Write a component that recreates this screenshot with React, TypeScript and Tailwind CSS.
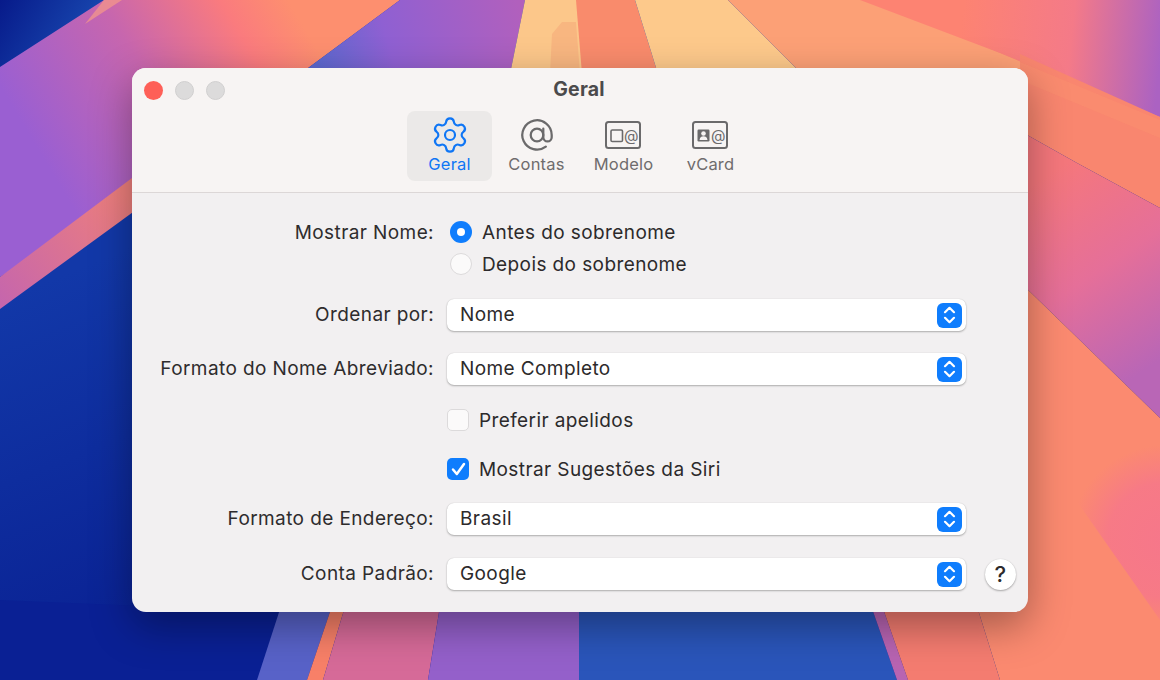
import React from "react";

const FONT = "font-['Inter','Liberation_Sans',sans-serif]";

function Wallpaper() {
  return (
    <svg className="absolute inset-0" width="1160" height="680" viewBox="0 0 1160 680">
      <defs>
        <linearGradient id="blueL" x1="0" y1="300" x2="130" y2="620" gradientUnits="userSpaceOnUse">
          <stop offset="0" stopColor="#1238a8" />
          <stop offset="1" stopColor="#0a2294" />
        </linearGradient>
        <linearGradient id="corner" x1="0" y1="0" x2="100" y2="60" gradientUnits="userSpaceOnUse">
          <stop offset="0" stopColor="#071a8a" />
          <stop offset="1" stopColor="#1c52b8" />
        </linearGradient>
        <linearGradient id="leftTop" x1="50" y1="170" x2="300" y2="20" gradientUnits="userSpaceOnUse">
          <stop offset="0" stopColor="#9a5fd2" />
          <stop offset="0.45" stopColor="#c766ae" />
          <stop offset="0.8" stopColor="#fa7b7e" />
          <stop offset="1" stopColor="#fd8f6f" />
        </linearGradient>
        <linearGradient id="purpleTop" x1="320" y1="70" x2="520" y2="10" gradientUnits="userSpaceOnUse">
          <stop offset="0" stopColor="#5d68cf" />
          <stop offset="0.35" stopColor="#8f60d2" />
          <stop offset="1" stopColor="#b160bd" />
        </linearGradient>
        <linearGradient id="rightTop" x1="960" y1="40" x2="1160" y2="60" gradientUnits="userSpaceOnUse">
          <stop offset="0" stopColor="#fd8372" />
          <stop offset="0.55" stopColor="#f47a88" />
          <stop offset="1" stopColor="#ab62c2" />
        </linearGradient>
        <linearGradient id="rightMid" x1="1040" y1="180" x2="1160" y2="360" gradientUnits="userSpaceOnUse">
          <stop offset="0" stopColor="#f5777c" />
          <stop offset="0.5" stopColor="#e56f99" />
          <stop offset="1" stopColor="#b966b6" />
        </linearGradient>
        <radialGradient id="pinkFade" cx="1165" cy="540" r="95" gradientUnits="userSpaceOnUse">
          <stop offset="0" stopColor="#f6778a" />
          <stop offset="0.6" stopColor="#f6778a" stopOpacity="0.85" />
          <stop offset="1" stopColor="#f6778a" stopOpacity="0" />
        </radialGradient>
        <linearGradient id="band" x1="0" y1="300" x2="130" y2="200" gradientUnits="userSpaceOnUse">
          <stop offset="0" stopColor="#c666ac" />
          <stop offset="1" stopColor="#ee7f7c" />
        </linearGradient>
      </defs>
      <rect width="1160" height="680" fill="url(#blueL)" />
      <polygon points="0,0 104,0 0,67" fill="url(#corner)" />
      <polygon points="104,0 400,0 300,74 300,150 140,190 0,277 0,67" fill="url(#leftTop)" />
      <polygon points="104,0 122,0 85,24" fill="#f79a88" opacity="0.7" />
      <polygon points="140,172 140,207 0,309 0,277" fill="url(#band)" />
      <polygon points="400,0 525,0 510,74 300,74" fill="url(#purpleTop)" />
      <polygon points="525,0 580,0 590,74 510,74" fill="#fcc78a" />
      <polygon points="550,74 552,34 562,22 576,22 580,74" fill="#f8b680" />
      <polygon points="576,0 635,0 658,74 582,74" fill="#f98b6c" />
      <polygon points="635,0 728,0 802,74 658,74" fill="#fdc98b" />
      <polygon points="850,0 1160,0 1160,130 1020,90" fill="#fb8870" />
      <polygon points="728,0 875,0 1045,72 1040,80 802,74" fill="#fca076" />
      <polygon points="860,0 1160,0 1160,117 1060,77 1000,53" fill="url(#rightTop)" />
      <polygon points="1020,54 1160,117 1160,208 1077,163 1020,131" fill="#f9866f" />
      <polygon points="1020,62 1160,120 1160,138 1020,80" fill="#fd9470" opacity="0.35" />
      <polygon points="1020,131 1077,163 1160,208 1160,418 1020,282" fill="url(#rightMid)" />
      <polygon points="1020,282 1160,418 1160,680 1020,680" fill="#fb8a70" />
      <polygon points="1057,473 1160,620 1160,420 1057,420" fill="url(#pinkFade)" />
      <polygon points="0,600 283,612 257,680 0,680" fill="#0a2094" />
      <polygon points="283,600 334,600 307,680 257,680" fill="#5862c8" />
      <polygon points="334,600 347,600 323,680 307,680" fill="#f88068" />
      <polygon points="347,600 441,600 428,680 323,680" fill="#d66a98" />
      <polygon points="441,600 579,600 579,680 428,680" fill="#9460ca" />
      <polygon points="579,600 869,600 897,680 579,680" fill="#2a55ba" />
      <polygon points="869,600 880,600 908,680 897,680" fill="#b864b2" />
      <polygon points="880,600 975,600 1000,680 908,680" fill="#f47c70" />
      <polygon points="975,600 1020,600 1020,680 1000,680" fill="#fb8a70" />
    </svg>
  );
}

function Stepper() {
  return (
    <span className="flex h-[25px] w-[25px] items-center justify-center rounded-[6px] bg-[#0f7dfd]">
      <svg width="15" height="20" viewBox="0 0 15 20" fill="none" stroke="#fff" strokeWidth="2.2" strokeLinecap="round" strokeLinejoin="round">
        <path d="M3 7.200 7.500 2.800 12 7.200" />
        <path d="M3 12.800 7.500 17.200 12 12.800" />
      </svg>
    </span>
  );
}

function Select({ value }: { value: string }) {
  return (
    <div className="flex h-[32px] w-[519px] items-center justify-between rounded-[7px] bg-white pl-[13px] pr-[4px] text-[#2c2a2b] shadow-[0_1px_2px_rgba(0,0,0,0.28),0_0_1px_rgba(0,0,0,0.18)]">
      <span>{value}</span>
      <Stepper />
    </div>
  );
}

function Row({ label, children, className = "" }: { label?: string; children: React.ReactNode; className?: string }) {
  return (
    <div className={`flex items-center ${className}`}>
      <div className="w-[302px] text-right text-[#2e2c2d]">{label}</div>
      <div className="ml-[13px] flex items-center">{children}</div>
    </div>
  );
}

function Tab({ label, active, children }: { label: string; active?: boolean; children: React.ReactNode }) {
  return (
    <div className={`flex h-[70px] w-[85px] flex-col items-center rounded-[8px] ${active ? "bg-[#ebe9e8] text-[#0f76f5]" : "text-[#6f6c6d]"}`}>
      <div className="flex h-[44px] items-center justify-center pt-[3px]">{children}</div>
      <span className="text-[16.500px] leading-[19px] tracking-[0.2px]">{label}</span>
    </div>
  );
}

function CardIcon({ person }: { person?: boolean }) {
  return (
    <svg width="36" height="28" viewBox="0 0 36 28" fill="none" className="-translate-x-[1px]">
      <rect x="1" y="1" width="34" height="26" rx="2.500" stroke="#6b6a6b" strokeWidth="2" />
      {person ? (
        <g>
          <rect x="5.500" y="8.500" width="12" height="12" rx="1.200" fill="#6b6a6b" />
          <circle cx="11.500" cy="12.500" r="2.300" fill="#f7f4f3" />
          <path d="M7.500 19c.4-2.800 2-3.800 4-3.800s3.600 1 4 3.800z" fill="#f7f4f3" />
        </g>
      ) : (
        <rect x="6" y="9" width="11.500" height="11.500" rx="1.300" stroke="#6b6a6b" strokeWidth="1.600" />
      )}
      <text x="26.500" y="19.500" textAnchor="middle" fontSize="15" fontFamily="Inter, sans-serif" fill="#6b6a6b">@</text>
    </svg>
  );
}

function Radio({ checked, label }: { checked?: boolean; label: string }) {
  return (
    <div className="flex h-[22px] items-center text-[#2c2a2b]">
      {checked ? (
        <span className="flex h-[22px] w-[22px] items-center justify-center rounded-full bg-[#0f7dfd]">
          <span className="h-[8px] w-[8px] rounded-full bg-white" />
        </span>
      ) : (
        <span className="h-[22px] w-[22px] rounded-full border border-[#dcdadb] bg-[#fbfafa]" />
      )}
      <span className="ml-[10px] pt-[3px]">{label}</span>
    </div>
  );
}

function Check({ checked, label }: { checked?: boolean; label: string }) {
  return (
    <div className="flex h-[22px] items-center text-[#2c2a2b]">
      {checked ? (
        <span className="flex h-[22px] w-[22px] items-center justify-center rounded-[5px] bg-[#0f7dfd]">
          <svg width="15" height="14" viewBox="0 0 15 14" fill="none" stroke="#fff" strokeWidth="2.500" strokeLinecap="round" strokeLinejoin="round">
            <path d="M2 7.500 5.800 12 13 2" />
          </svg>
        </span>
      ) : (
        <span className="h-[22px] w-[22px] rounded-[5px] border border-[#dcdadb] bg-[#fbfafa]" />
      )}
      <span className="ml-[10px] pt-[3px]">{label}</span>
    </div>
  );
}

export default function App() {
  return (
    <div className={`relative h-[680px] w-[1160px] overflow-hidden pl-[132px] pt-[68px] ${FONT}`}>
      <Wallpaper />
      <div className="relative h-[544px] w-[896px] overflow-hidden rounded-[14px] bg-[#f2f0f1] text-[19px] tracking-[0.4px] shadow-[0_14px_40px_rgba(0,0,0,0.35)]">
        <div className="h-[125px] border-b border-[#dcd7d7] bg-[#f7f4f3]">
          <div className="flex h-[43px] items-center pl-[12px]">
            <div className="flex gap-[12px] pt-[1px]">
              <span className="h-[19px] w-[19px] rounded-full bg-[#fe5f57]" />
              <span className="h-[19px] w-[19px] rounded-full border border-[#d0cfcf] bg-[#dcdbdb]" />
              <span className="h-[19px] w-[19px] rounded-full border border-[#d0cfcf] bg-[#dcdbdb]" />
            </div>
            <div className="ml-[314px] w-[80px] text-center text-[19.500px] font-bold leading-none tracking-[0.2px] text-[#4b4a4b]">Geral</div>
          </div>
          <div className="flex gap-[2px] pl-[275px]">
            <Tab label="Geral" active>
              <svg width="40" height="40" viewBox="0 0 24 24" fill="none" stroke="#0f76f5" strokeWidth="1.300" strokeLinecap="round" strokeLinejoin="round">
                <path d="M9.671 4.136a2.340 2.340 0 0 1 4.659 0 2.340 2.340 0 0 0 3.319 1.915 2.340 2.340 0 0 1 2.330 4.033 2.340 2.340 0 0 0 0 3.831 2.340 2.340 0 0 1-2.330 4.033 2.340 2.340 0 0 0-3.319 1.915 2.340 2.340 0 0 1-4.659 0 2.340 2.340 0 0 0-3.320-1.915 2.340 2.340 0 0 1-2.330-4.033 2.340 2.340 0 0 0 0-3.831A2.340 2.340 0 0 1 6.350 6.051a2.340 2.340 0 0 0 3.320-1.915" />
                <circle cx="12" cy="12" r="3" />
              </svg>
            </Tab>
            <Tab label="Contas">
              <svg width="36" height="36" viewBox="0 0 24 24" fill="none" stroke="#6b6a6b" strokeWidth="1.500" strokeLinecap="round" strokeLinejoin="round">
                <circle cx="12" cy="12" r="4.200" />
                <path d="M16.200 7.800v5.700a2.800 2.800 0 0 0 5.600 0V12a9.800 9.800 0 1 0-3.900 7.800" />
              </svg>
            </Tab>
            <Tab label="Modelo"><CardIcon /></Tab>
            <Tab label="vCard"><CardIcon person /></Tab>
          </div>
        </div>
        <div className="flex flex-col pt-[28px]">
          <div className="flex items-start">
            <div className="flex h-[22px] w-[302px] items-center justify-end pt-[3px] text-[#2e2c2d]">Mostrar Nome:</div>
            <div className="ml-[16px] flex flex-col gap-[10px]">
              <Radio checked label="Antes do sobrenome" />
              <Radio label="Depois do sobrenome" />
            </div>
          </div>
          <Row label="Ordenar por:" className="mt-[24px]"><Select value="Nome" /></Row>
          <Row label="Formato do Nome Abreviado:" className="mt-[22px]"><Select value="Nome Completo" /></Row>
          <Row className="mt-[24px]"><Check label="Preferir apelidos" /></Row>
          <Row className="mt-[27px]"><Check checked label="Mostrar Sugestões da Siri" /></Row>
          <Row label="Formato de Endereço:" className="mt-[23px]"><Select value="Brasil" /></Row>
          <Row label="Conta Padrão:" className="mt-[23px]">
            <Select value="Google" />
            <div className="ml-[19px] flex h-[31px] w-[31px] items-center justify-center rounded-full bg-white text-[22px] font-medium text-[#2c2a2b] shadow-[0_1px_2px_rgba(0,0,0,0.3),0_0_1px_rgba(0,0,0,0.15)]">?</div>
          </Row>
        </div>
      </div>
    </div>
  );
}
